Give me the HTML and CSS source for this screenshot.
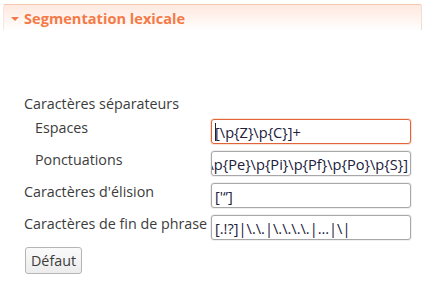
FILE: index.html
```html
<!DOCTYPE html>
<html>
<head>
<meta charset="utf-8">
<link rel="stylesheet" href="styles.css">
</head>
<body>
<div class="section">
  <div class="header">
    <span class="twisty"></span>
    <span class="title">Segmentation lexicale</span>
  </div>
  <div class="form">
    <div class="label group">Caractères séparateurs</div>
    <div class="row">
      <div class="label sub">Espaces</div>
      <div class="field focused"><span class="caret"></span><span class="val">[\p{Z}\p{C}]+</span></div>
    </div>
    <div class="row">
      <div class="label sub">Ponctuations</div>
      <div class="field end"><span class="val">[\p{Ps}\p{Pe}\p{Pi}\p{Pf}\p{Po}\p{S}]</span></div>
    </div>
    <div class="row">
      <div class="label">Caractères d'élision</div>
      <div class="field"><span class="val">['‘’]</span></div>
    </div>
    <div class="row">
      <div class="label">Caractères de fin de phrase</div>
      <div class="field"><span class="val">[.!?]|\.\.|\.\.\.\.|…|\|</span></div>
    </div>
    <div class="actions">
      <button class="btn">Défaut</button>
    </div>
  </div>
</div>
</body>
</html>
```
FILE: styles.css
```css
html, body {
  margin: 0;
  padding: 0;
  background: #ffffff;
  font-family: "Open Sans", "DejaVu Sans", sans-serif;
  font-size: 14.3px;
  color: #3c3c3c;
}
.section {
  padding: 4px 5px 0 3px;
}
.header {
  height: 26px;
  border-top: 1px solid #f6c8b0;
  border-left: 1px solid #fbe6da;
  border-right: 1px solid #f3dcd0;
  border-radius: 2px 2px 0 0;
  background: linear-gradient(to bottom, #fde9df 0%, #fff3ee 50%, #ffffff 100%);
  display: flex;
  align-items: flex-start;
  padding-top: 3px;
  box-sizing: border-box;
}
.twisty {
  width: 0;
  height: 0;
  border-left: 4px solid transparent;
  border-right: 4px solid transparent;
  border-top: 4px solid #f07a48;
  margin: 9px 5px 0 7px;
}
.title {
  font-weight: bold;
  font-size: 14.6px;
  color: #f47a47;
  line-height: 20px;
}
.form {
  padding: 64px 0 0 21px;
  display: flex;
  flex-direction: column;
}
.label {
  line-height: 20px;
  white-space: nowrap;
}
.group {
  margin-bottom: 5px;
}
.row {
  display: flex;
  align-items: flex-start;
  height: 25px;
  margin-bottom: 7px;
}
.row .label {
  width: 187px;
  flex: none;
  line-height: 17px;
}
.row .label.sub {
  padding-left: 11px;
  width: 176px;
}
.field {
  width: 200px;
  height: 25px;
  box-sizing: border-box;
  border: 1px solid #a8a8a8;
  border-radius: 3px;
  background: #fff;
  box-shadow: 0 0 0 1px #f0f0f0;
  display: flex;
  align-items: center;
  overflow: hidden;
  padding: 0 3px;
  color: #20203a;
  white-space: nowrap;
  font-size: 14.6px;
}
.field.focused {
  border-color: #e0653a;
  box-shadow: 0 0 0 1px #fbe3d8;
}
.field.end {
  justify-content: flex-end;
  padding: 0 2px 0 0;
}
.val {
  flex: none;
}
.caret {
  width: 1px;
  height: 18px;
  background: #222;
  flex: none;
  margin-right: -1px;
}
.actions {
  display: flex;
}
.btn {
  margin-left: 1px;
  font-family: inherit;
  font-size: 14.3px;
  color: #3c3c3c;
  height: 27px;
  padding: 0 5px;
  border: 1px solid #b5b5b5;
  border-radius: 3px;
  background: linear-gradient(to bottom, #fafafa, #ececec);
}
```
